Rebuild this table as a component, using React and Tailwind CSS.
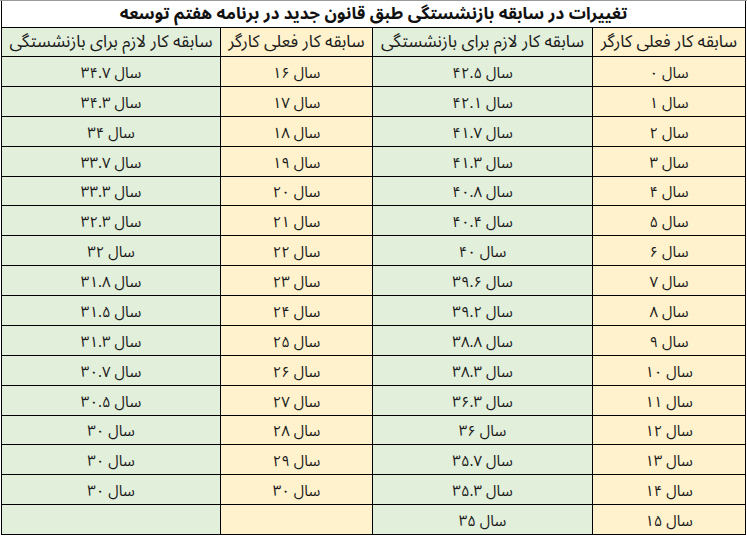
import React from "react";

const fa = (s) => String(s).replace(/[0-9]/g, (d) => "۰۱۲۳۴۵۶۷۸۹"[d]);

const colA = ["34.7", "34.3", "34", "33.7", "33.3", "32.3", "32", "31.8", "31.5", "31.3", "30.7", "30.5", "30", "30", "30", null];
const colB = [16, 17, 18, 19, 20, 21, 22, 23, 24, 25, 26, 27, 28, 29, 30, null];
const colC = ["42.5", "42.1", "41.7", "41.3", "40.8", "40.4", "40", "39.6", "39.2", "38.8", "38.3", "36.3", "36", "35.7", "35.3", "35"];
const colD = Array.from({ length: 16 }, (_, i) => i);

const FONT = { fontFamily: '"Noto Sans Arabic", "DejaVu Sans", sans-serif' };

function Cell({ value, green, last }) {
  const has = value !== null && value !== undefined;
  return (
    <div
      dir="ltr"
      className={`h-[29.875px] border-b border-black flex items-center justify-center gap-[4px] pt-[4px] text-[15px] leading-none text-[#1a1a1a] ${
        green ? "bg-[#e2efda]" : "bg-[#fff2cc]"
      } ${last ? "" : "border-r"}`}
    >
      {has && (
        <>
          <span dir="ltr" className="inline-block leading-none">{fa(value)}</span>
          <span dir="rtl" className="inline-block leading-none">سال</span>
        </>
      )}
    </div>
  );
}

function Head({ children, green, last }) {
  return (
    <div
      dir="rtl"
      className={`h-[29px] border-b border-black flex items-center justify-center whitespace-nowrap text-[17px] leading-none text-[#1a1a1a] ${
        green ? "bg-[#e2efda]" : "bg-[#fff2cc]"
      } ${last ? "" : "border-r"}`}
    >
      <span className="inline-block leading-none">{children}</span>
    </div>
  );
}

export default function App() {
  const rows = colD.map((_, i) => i);
  return (
    <div className="w-[747px] h-[537px] bg-white border-t border-[#9a9a9a] px-[1px]" style={FONT}>
      <div className="border-x border-black">
        <div
          dir="rtl"
          className="h-[27px] border-b border-black flex items-center justify-center text-[17px] font-bold text-[#111] leading-none"
        >
          <span className="inline-block leading-none">
            تغییرات در سابقه بازنشستگی طبق قانون جدید در برنامه هفتم توسعه
          </span>
        </div>
        <div className="grid grid-cols-[219px_152px_220px_1fr]">
          <Head green>سابقه کار لازم برای بازنشستگی</Head>
          <Head>سابقه کار فعلی کارگر</Head>
          <Head green>سابقه کار لازم برای بازنشستگی</Head>
          <Head last>سابقه کار فعلی کارگر</Head>
          {rows.map((i) => (
            <React.Fragment key={i}>
              <Cell value={colA[i]} green />
              <Cell value={colB[i]} />
              <Cell value={colC[i]} green />
              <Cell value={colD[i]} last />
            </React.Fragment>
          ))}
        </div>
      </div>
    </div>
  );
}
